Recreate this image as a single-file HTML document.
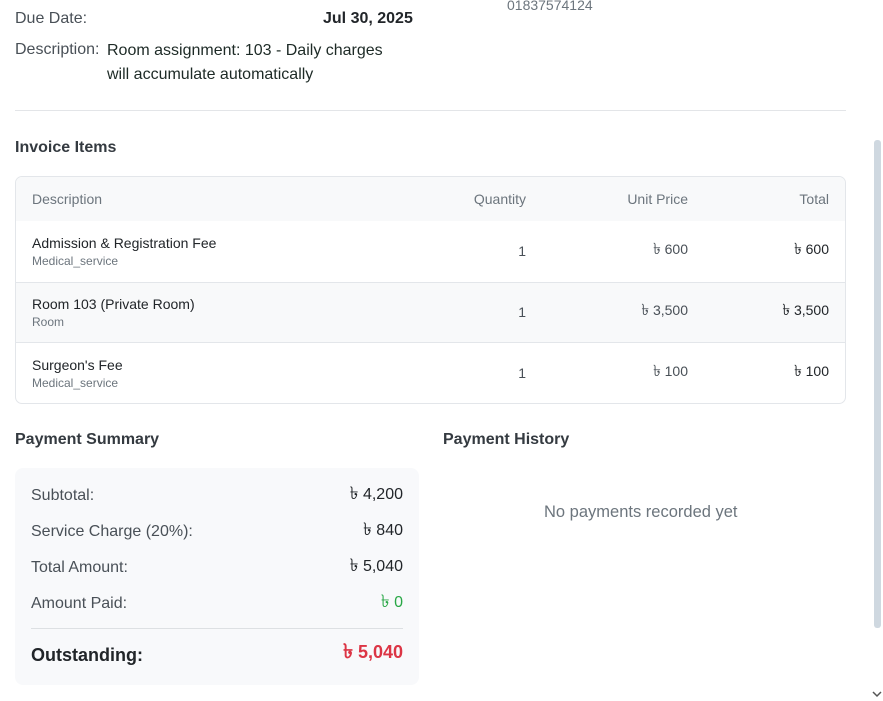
<!DOCTYPE html>
<html><head><meta charset="utf-8"><style>
*{margin:0;padding:0;box-sizing:border-box}
body{width:883px;height:701px;overflow:hidden;background:#fff;font-family:"Liberation Sans","DejaVu Sans",sans-serif;color:#212529;position:relative}
.a{position:absolute;white-space:nowrap;line-height:20px}
.lbl{color:#495057;font-size:16px}
.h{font-weight:bold;font-size:16px;color:#343a40}
.th{color:#6c757d;font-size:14px}
.nm{font-size:14px;color:#212529}
.sub{font-size:12px;color:#6c757d;line-height:14px}
.num{font-size:14px;color:#495057;text-align:right}
.r{text-align:right}
.t{font-size:1.1em}
</style></head><body>
<div class="a" style="left:507px;top:-5px;font-size:14px;color:#6c757d">01837574124</div>
<div class="a lbl" style="left:15px;top:9px">Due Date:</div>
<div class="a" style="left:323px;top:9px;font-size:16px;font-weight:bold;color:#212529">Jul 30, 2025</div>
<div class="a lbl" style="left:15px;top:40px">Description:</div>
<div class="a" style="left:107px;top:39px;font-size:16px;color:#1d2a26;line-height:24px">Room assignment: 103 - Daily charges<br>will accumulate automatically</div>
<div class="a" style="left:15px;top:110px;width:831px;height:1px;background:#e3e5e8"></div>
<div class="a h" style="left:15px;top:138px">Invoice Items</div>

<div class="a" style="left:15px;top:176px;width:831px;height:228px;border:1px solid #e3e6ea;border-radius:7px;overflow:hidden">
 <div style="position:absolute;left:0;top:0;width:100%;height:44px;background:#f8f9fa"></div>
 <div style="position:absolute;left:0;top:105px;width:100%;height:61px;background:#f8f9fa;border-top:1px solid #e3e6ea;border-bottom:1px solid #e3e6ea"></div>
</div>
<div class="a th" style="left:32px;top:189px">Description</div>
<div class="a th r" style="right:357px;top:189px">Quantity</div>
<div class="a th r" style="right:195px;top:189px">Unit Price</div>
<div class="a th r" style="right:54px;top:189px">Total</div>

<div class="a nm" style="left:32px;top:233px">Admission &amp; Registration Fee</div>
<div class="a sub" style="left:32px;top:254px">Medical_service</div>
<div class="a num" style="right:357px;top:241px">1</div>
<div class="a num" style="right:195px;top:239px"><span class="t">৳</span> 600</div>
<div class="a num" style="right:54px;top:239px;color:#212529"><span class="t">৳</span> 600</div>

<div class="a nm" style="left:32px;top:294px">Room 103 (Private Room)</div>
<div class="a sub" style="left:32px;top:315px">Room</div>
<div class="a num" style="right:357px;top:302px">1</div>
<div class="a num" style="right:195px;top:300px"><span class="t">৳</span> 3,500</div>
<div class="a num" style="right:54px;top:300px;color:#212529"><span class="t">৳</span> 3,500</div>

<div class="a nm" style="left:32px;top:355px">Surgeon's Fee</div>
<div class="a sub" style="left:32px;top:376px">Medical_service</div>
<div class="a num" style="right:357px;top:363px">1</div>
<div class="a num" style="right:195px;top:361px"><span class="t">৳</span> 100</div>
<div class="a num" style="right:54px;top:361px;color:#212529"><span class="t">৳</span> 100</div>

<div class="a h" style="left:15px;top:430px">Payment Summary</div>
<div class="a h" style="left:443px;top:430px">Payment History</div>
<div class="a" style="left:15px;top:468px;width:404px;height:217px;background:#f8f9fb;border-radius:8px"></div>
<div class="a lbl" style="left:31px;top:486px">Subtotal:</div>
<div class="a r" style="right:480px;top:483px;font-size:16px"><span class="t">৳</span> 4,200</div>
<div class="a lbl" style="left:31px;top:522px">Service Charge (20%):</div>
<div class="a r" style="right:480px;top:519px;font-size:16px"><span class="t">৳</span> 840</div>
<div class="a lbl" style="left:31px;top:558px">Total Amount:</div>
<div class="a r" style="right:480px;top:555px;font-size:16px"><span class="t">৳</span> 5,040</div>
<div class="a lbl" style="left:31px;top:594px">Amount Paid:</div>
<div class="a r" style="right:480px;top:591px;font-size:16px;color:#28a745"><span class="t">৳</span> 0</div>
<div class="a" style="left:31px;top:628px;width:372px;height:1px;background:#dde0e3"></div>
<div class="a" style="left:31px;top:645px;font-size:18px;font-weight:bold;color:#212529">Outstanding:</div>
<div class="a r" style="right:480px;top:642px;font-size:18px;font-weight:bold;color:#dc3545"><span class="t">৳</span> 5,040</div>

<div class="a" style="left:544px;top:502px;font-size:16.5px;color:#6c757d">No payments recorded yet</div>

<div class="a" style="left:874px;top:140px;width:7px;height:488px;background:#cfd8e0;border-radius:3px"></div>
<svg class="a" style="left:872px;top:690px" width="10" height="8"><path d="M1 2 L5 6 L9 2" stroke="#555" stroke-width="1.5" fill="none"/></svg>
</body></html>
